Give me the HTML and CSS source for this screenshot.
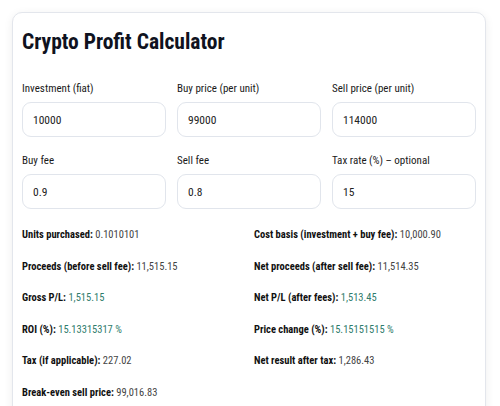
FILE: index.html
```html
<!DOCTYPE html>
<html>
<head>
<meta charset="utf-8">
<link rel="stylesheet" href="styles.css">
</head>
<body>
<div class="card">
  <h1 class="title">Crypto Profit Calculator</h1>
  <div class="fields">
    <div class="field">
      <label class="label">Investment (fiat)</label>
      <input class="input" type="text" value="10000">
    </div>
    <div class="field">
      <label class="label">Buy price (per unit)</label>
      <input class="input" type="text" value="99000">
    </div>
    <div class="field">
      <label class="label">Sell price (per unit)</label>
      <input class="input" type="text" value="114000">
    </div>
    <div class="field">
      <label class="label">Buy fee</label>
      <input class="input" type="text" value="0.9">
    </div>
    <div class="field">
      <label class="label">Sell fee</label>
      <input class="input" type="text" value="0.8">
    </div>
    <div class="field">
      <label class="label">Tax rate (%) – optional</label>
      <input class="input" type="text" value="15">
    </div>
  </div>
  <div class="results">
    <div class="row"><b>Units purchased:</b> <span class="val">0.1010101</span></div>
    <div class="row"><b>Cost basis (investment + buy fee):</b> <span class="val">10,000.90</span></div>
    <div class="row"><b>Proceeds (before sell fee):</b> <span class="val">11,515.15</span></div>
    <div class="row"><b>Net proceeds (after sell fee):</b> <span class="val">11,514.35</span></div>
    <div class="row"><b>Gross P/L:</b> <span class="val pos">1,515.15</span></div>
    <div class="row"><b>Net P/L (after fees):</b> <span class="val pos">1,513.45</span></div>
    <div class="row"><b>ROI (%):</b> <span class="val pos">15.13315317 %</span></div>
    <div class="row"><b>Price change (%):</b> <span class="val pos">15.15151515 %</span></div>
    <div class="row"><b>Tax (if applicable):</b> <span class="val">227.02</span></div>
    <div class="row"><b>Net result after tax:</b> <span class="val">1,286.43</span></div>
    <div class="row"><b>Break-even sell price:</b> <span class="val">99,016.83</span></div>
  </div>
</div>
</body>
</html>
```
FILE: styles.css
```css
* { box-sizing: border-box; }
html, body { margin: 0; padding: 0; }
body {
  background: #ffffff;
  font-family: Roboto, "Liberation Sans", Arial, sans-serif;
  font-stretch: 75%;
  color: #111;
  padding: 12px 14px 0 12px;
  height: 406px;
  overflow: hidden;
}
.card {
  background: #fff;
  border: 1px solid #e3e6ec;
  border-radius: 10px;
  box-shadow: 0 2px 10px rgba(0, 0, 0, 0.07);
  padding: 16px 9px 40px 9px;
  width: 474px;
}
.title {
  margin: 0;
  font-size: 21.5px;
  line-height: 26px;
  font-weight: 700;
  color: #0f1220;
}
.fields {
  margin-top: 26px;
  display: grid;
  grid-template-columns: repeat(3, 1fr);
  column-gap: 11px;
  row-gap: 16px;
}
.field {
  display: flex;
  flex-direction: column;
  gap: 6px;
}
.label {
  font-size: 11px;
  line-height: 15px;
  color: #1a1a1a;
}
.input {
  height: 35px;
  border: 1px solid #e1e5ec;
  border-radius: 9px;
  padding: 0 10px;
  font-family: inherit;
  font-stretch: 75%;
  font-size: 11.5px;
  color: #222;
  background: #fff;
  outline: none;
  width: 100%;
}
.results {
  margin-top: 18px;
  display: grid;
  grid-template-columns: 1fr 1fr;
  column-gap: 10px;
  row-gap: 16.5px;
}
.row {
  font-size: 10.5px;
  line-height: 15px;
  color: #111;
}
.row b { font-weight: 700; }
.val { color: #444; }
.val.pos { color: #2f7c6c; }
```
